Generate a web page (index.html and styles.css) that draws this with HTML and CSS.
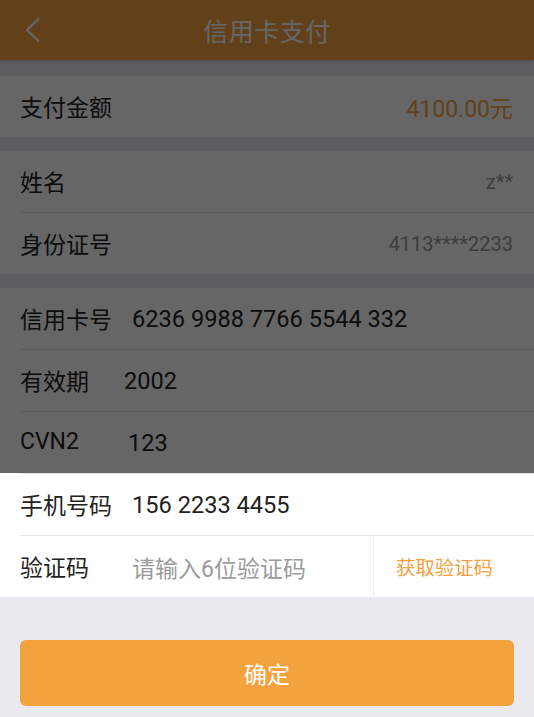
FILE: index.html
```html
<!DOCTYPE html>
<html lang="zh-CN">
<head>
<meta charset="utf-8">
<title>信用卡支付</title>
<link rel="stylesheet" href="styles.css">
</head>
<body>
<div class="app">
  <header class="topbar">
    <svg class="back" width="16" height="26" viewBox="0 0 16 26" aria-hidden="true">
      <polyline points="13.5,2 2,13 13.5,24" fill="none" stroke="#ffffff" stroke-width="2.4" stroke-linecap="round" stroke-linejoin="round"/>
    </svg>
    <h1 class="title">信用卡支付</h1>
  </header>

  <section class="group group-first">
    <div class="row">
      <span class="label">支付金额</span>
      <span class="amount">4100.00元</span>
    </div>
  </section>

  <section class="group">
    <div class="row">
      <span class="label">姓名</span>
      <span class="info">z**</span>
    </div>
    <div class="row">
      <span class="label">身份证号</span>
      <span class="info">4113****2233</span>
    </div>
  </section>

  <section class="group">
    <div class="row">
      <span class="label label-card">信用卡号</span>
      <span class="value">6236 9988 7766 5544 332</span>
    </div>
    <div class="row">
      <span class="label label-expire">有效期</span>
      <span class="value">2002</span>
    </div>
    <div class="row">
      <span class="label label-cvn">CVN2</span>
      <span class="value">123</span>
    </div>
    <div class="row">
      <span class="label label-card">手机号码</span>
      <span class="value">156 2233 4455</span>
    </div>
    <div class="row row-code">
      <span class="label label-card">验证码</span>
      <span class="placeholder">请输入6位验证码</span>
      <span class="get-code">获取验证码</span>
    </div>
  </section>

  <div class="actions">
    <button class="confirm" type="button">确定</button>
  </div>

  <div class="mask"></div>
</div>
</body>
</html>
```

FILE: styles.css
```css
* {
  box-sizing: border-box;
}

html, body {
  margin: 0;
  padding: 0;
}

body {
  background: #e9e9ee;
  font-family: Roboto, "Noto Sans CJK SC", "Noto Sans", sans-serif;
  color: #222222;
}

.app {
  position: relative;
  width: 534px;
  min-height: 717px;
  background: #e9e9ee;
  overflow: hidden;
}

.topbar {
  position: relative;
  height: 60px;
  background: #f4a13f;
  display: flex;
  align-items: center;
  justify-content: center;
  box-shadow: 0 1px 3px rgba(0, 0, 0, 0.25);
}

.back {
  position: absolute;
  left: 25px;
  top: 17px;
}

.title {
  margin: 0;
  font-size: 25px;
  font-weight: normal;
  color: #ffffff;
  letter-spacing: 0.5px;
}

.group {
  background: #ffffff;
  margin-top: 14px;
}

.group-first {
  margin-top: 16px;
}

.row {
  height: 61px;
  margin-left: 20px;
  padding-right: 21px;
  display: flex;
  align-items: center;
}

.row + .row {
  border-top: 1px solid #e3e3e3;
  height: 62px;
}

.label {
  font-size: 23px;
  color: #222222;
  flex: none;
  position: relative;
  top: -1px;
}

.label-card {
  width: 112px;
}

.label-expire {
  width: 104px;
}

.label-cvn {
  width: 108px;
}

.amount {
  margin-left: auto;
  font-size: 23px;
  color: #f4a13f;
}

.info {
  margin-left: auto;
  font-size: 20px;
  color: #999999;
}

.value {
  font-size: 23.6px;
  color: #222222;
}

.placeholder {
  font-size: 23px;
  color: #9b9b9b;
  flex: 1;
}

.row-code {
  padding-right: 0;
  align-items: stretch;
}

.row-code .label,
.row-code .placeholder {
  display: flex;
  align-items: center;
}

.get-code {
  width: 161px;
  border-left: 1px solid #f1f1f1;
  padding-left: 22px;
  display: flex;
  align-items: center;
  font-size: 19.4px;
  color: #f4a13f;
}

.actions {
  padding: 43px 20px 0;
}

.confirm {
  display: block;
  width: 100%;
  height: 66px;
  border: none;
  border-radius: 6px;
  background: #f4a23e;
  color: #ffffff;
  font-family: Roboto, "Noto Sans CJK SC", sans-serif;
  font-size: 23px;
  padding: 0;
}

.mask {
  position: absolute;
  left: 0;
  top: 0;
  width: 100%;
  height: 473px;
  background: rgba(0, 0, 0, 0.6);
}
```
